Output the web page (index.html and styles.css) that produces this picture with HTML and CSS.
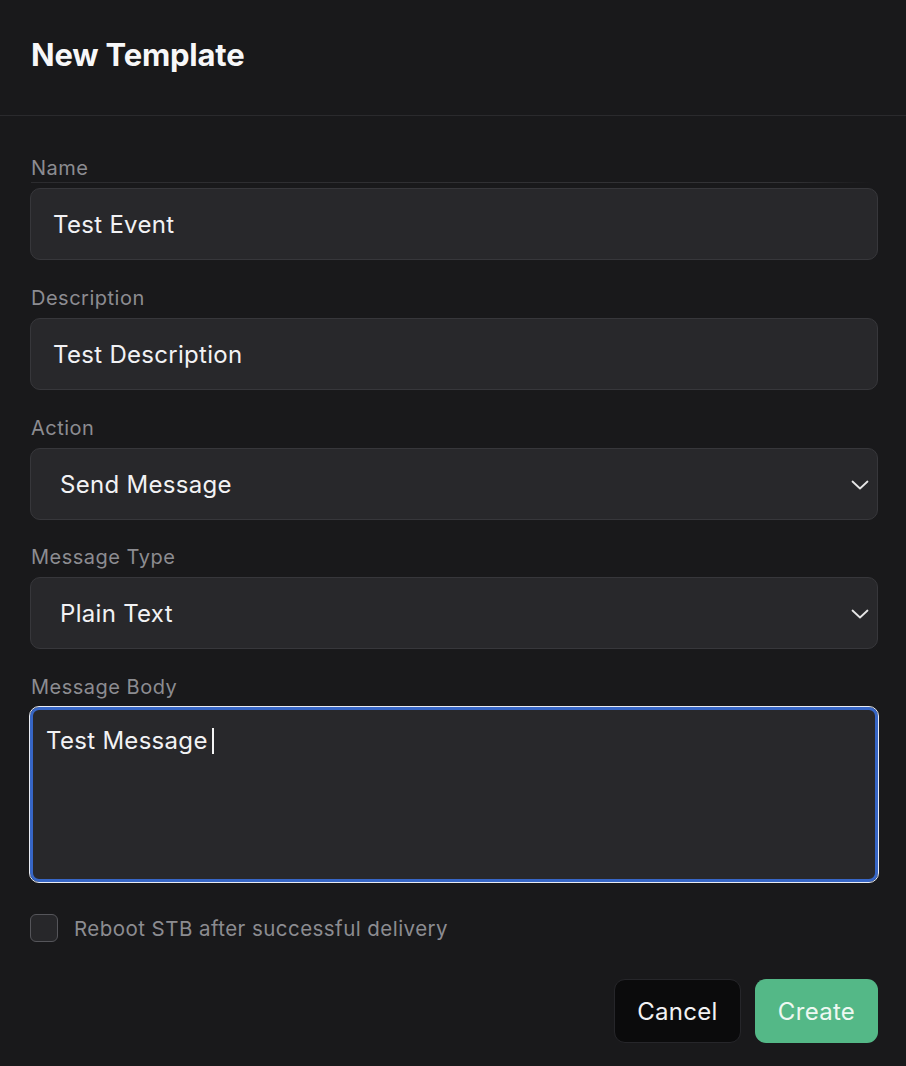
FILE: index.html
```html
<!DOCTYPE html>
<html lang="en">
<head>
<meta charset="utf-8">
<title>New Template</title>
<link rel="stylesheet" href="styles.css">
</head>
<body>
<div class="dialog">
  <header class="dialog-header">
    <h1 class="dialog-title">New Template</h1>
  </header>
  <form class="dialog-body">
    <div class="field">
      <label class="field-label field-label--ruled">Name</label>
      <div class="control"><span class="control-text">Test Event</span></div>
    </div>
    <div class="field">
      <label class="field-label">Description</label>
      <div class="control"><span class="control-text">Test Description</span></div>
    </div>
    <div class="field">
      <label class="field-label">Action</label>
      <div class="control control--select">
        <span class="control-text">Send Message</span>
        <svg class="chevron" viewBox="0 0 18 10" width="18" height="10"><path d="M1.5 1.5 L9 8.5 L16.5 1.5" fill="none" stroke="#e6e6e6" stroke-width="1.8" stroke-linecap="round" stroke-linejoin="round"/></svg>
      </div>
    </div>
    <div class="field field--tight">
      <label class="field-label">Message Type</label>
      <div class="control control--select">
        <span class="control-text">Plain Text</span>
        <svg class="chevron" viewBox="0 0 18 10" width="18" height="10"><path d="M1.5 1.5 L9 8.5 L16.5 1.5" fill="none" stroke="#e6e6e6" stroke-width="1.8" stroke-linecap="round" stroke-linejoin="round"/></svg>
      </div>
    </div>
    <div class="field">
      <label class="field-label">Message Body</label>
      <div class="textarea"><span class="control-text">Test Message </span><span class="caret"></span></div>
    </div>
    <label class="check-row">
      <span class="checkbox"></span>
      <span class="check-label">Reboot STB after successful delivery</span>
    </label>
    <div class="actions">
      <button type="button" class="btn btn--cancel">Cancel</button>
      <button type="button" class="btn btn--create">Create</button>
    </div>
  </form>
</div>
</body>
</html>
```
FILE: styles.css
```css
* { box-sizing: border-box; }
html, body {
  margin: 0;
  padding: 0;
  background: #19191b;
}
body {
  font-family: Inter, "Noto Sans", "Liberation Sans", sans-serif;
  color: #f2f2f4;
}
.dialog {
  width: 906px;
  min-height: 1066px;
  background: #19191b;
}
.dialog-header {
  height: 116px;
  border-bottom: 1px solid #2a2a2d;
  padding: 0 31px;
  display: flex;
  align-items: center;
}
.dialog-title {
  margin: 0 0 6px 0;
  font-size: 31px;
  font-weight: 700;
  letter-spacing: -0.2px;
  color: #f7f7f8;
}
.dialog-body {
  padding: 40px 28px 0 30px;
  display: flex;
  flex-direction: column;
}
.field {
  display: flex;
  flex-direction: column;
  margin-bottom: 26px;
}
.field--tight {
  margin-top: -1px;
  margin-bottom: 26px;
}
.field-label {
  font-size: 20px;
  line-height: 24px;
  letter-spacing: 0.5px;
  color: #8c8c91;
  margin: 0 0 8px 1px;
  position: relative;
}
.field-label--ruled::after {
  content: "";
  position: absolute;
  left: 0;
  right: 6px;
  bottom: -3px;
  height: 1px;
  background: linear-gradient(to right, #2c2c2f, #333336 90%, rgba(50,50,53,0));
}
.control {
  height: 72px;
  background: #28282b;
  border: 1px solid #37373b;
  border-radius: 10px;
  display: flex;
  align-items: center;
  padding: 0 22px;
}
.control-text {
  font-size: 24px;
  letter-spacing: 0.3px;
  color: #f2f2f4;
  white-space: pre;
}
.control--select {
  padding: 0 8px 0 29px;
  justify-content: space-between;
}
.chevron {
  display: block;
  margin-top: 1px;
}
.textarea {
  height: 175px;
  background: #28282b;
  border: 3px solid #3766c6;
  border-radius: 9px;
  outline: 1.5px solid #e9ecf3;
  outline-offset: 0;
  padding: 16px 13px;
  display: flex;
  align-items: flex-start;
}
.caret {
  display: inline-block;
  width: 2px;
  height: 26px;
  background: #f4f4f4;
  margin-top: 2px;
  margin-left: -3px;
}
.check-row {
  display: flex;
  align-items: center;
  gap: 16px;
  margin-top: 6px;
}
.checkbox {
  width: 28px;
  height: 28px;
  border-radius: 6px;
  border: 1.5px solid #55555a;
  background: #27272a;
}
.check-label {
  font-size: 20.5px;
  color: #8c8c91;
  letter-spacing: 0.45px;
}
.actions {
  margin-top: 37px;
  display: flex;
  justify-content: flex-end;
  gap: 14px;
}
.btn {
  height: 64px;
  border-radius: 11px;
  font-family: inherit;
  font-size: 24px;
  letter-spacing: 0.3px;
  padding: 0 10px;
  cursor: pointer;
}
.btn--cancel {
  width: 127px;
  background: #0b0b0c;
  border: 1px solid #26262a;
  color: #f2f2f4;
}
.btn--create {
  width: 123px;
  background: #54b887;
  border: none;
  color: #eef8f2;
}
```
